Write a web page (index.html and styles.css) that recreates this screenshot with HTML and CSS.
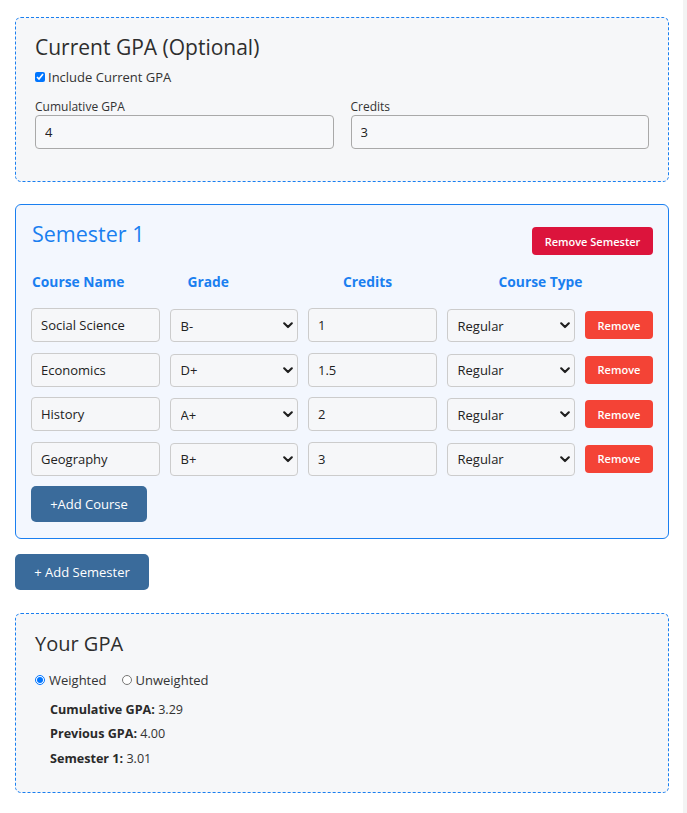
FILE: index.html
```html
<!DOCTYPE html>
<html lang="en">
<head>
<meta charset="utf-8">
<title>GPA Calculator</title>
<link rel="stylesheet" href="styles.css">
</head>
<body>
<main class="page">
  <section class="card card-dashed current">
    <h2 class="card-title">Current GPA (Optional)</h2>
    <label class="check-row"><input type="checkbox" class="check" checked> Include Current GPA</label>
    <div class="fields">
      <div class="field">
        <label class="field-label">Cumulative GPA</label>
        <input class="text-input" type="text" value="4">
      </div>
      <div class="field">
        <label class="field-label">Credits</label>
        <input class="text-input" type="text" value="3">
      </div>
    </div>
  </section>

  <section class="card semester">
    <div class="sem-head">
      <h2 class="sem-title">Semester 1</h2>
      <button class="btn btn-remove-sem">Remove Semester</button>
    </div>
    <div class="col-heads">
      <span>Course Name</span>
      <span>Grade</span>
      <span>Credits</span>
      <span>Course Type</span>
    </div>
    <div class="rows">
      <div class="row">
        <input class="cell-input" type="text" value="Social Science">
        <div class="select-wrap"><select class="cell-select"><option>B-</option></select><svg class="chev" viewBox="0 0 10 7" aria-hidden="true"><path d="M1.2 1.3 L5 5.1 L8.8 1.3"/></svg></div>
        <input class="cell-input" type="text" value="1">
        <div class="select-wrap"><select class="cell-select"><option>Regular</option></select><svg class="chev" viewBox="0 0 10 7" aria-hidden="true"><path d="M1.2 1.3 L5 5.1 L8.8 1.3"/></svg></div>
        <button class="btn btn-remove">Remove</button>
      </div>
      <div class="row">
        <input class="cell-input" type="text" value="Economics">
        <div class="select-wrap"><select class="cell-select"><option>D+</option></select><svg class="chev" viewBox="0 0 10 7" aria-hidden="true"><path d="M1.2 1.3 L5 5.1 L8.8 1.3"/></svg></div>
        <input class="cell-input" type="text" value="1.5">
        <div class="select-wrap"><select class="cell-select"><option>Regular</option></select><svg class="chev" viewBox="0 0 10 7" aria-hidden="true"><path d="M1.2 1.3 L5 5.1 L8.8 1.3"/></svg></div>
        <button class="btn btn-remove">Remove</button>
      </div>
      <div class="row">
        <input class="cell-input" type="text" value="History">
        <div class="select-wrap"><select class="cell-select"><option>A+</option></select><svg class="chev" viewBox="0 0 10 7" aria-hidden="true"><path d="M1.2 1.3 L5 5.1 L8.8 1.3"/></svg></div>
        <input class="cell-input" type="text" value="2">
        <div class="select-wrap"><select class="cell-select"><option>Regular</option></select><svg class="chev" viewBox="0 0 10 7" aria-hidden="true"><path d="M1.2 1.3 L5 5.1 L8.8 1.3"/></svg></div>
        <button class="btn btn-remove">Remove</button>
      </div>
      <div class="row">
        <input class="cell-input" type="text" value="Geography">
        <div class="select-wrap"><select class="cell-select"><option>B+</option></select><svg class="chev" viewBox="0 0 10 7" aria-hidden="true"><path d="M1.2 1.3 L5 5.1 L8.8 1.3"/></svg></div>
        <input class="cell-input" type="text" value="3">
        <div class="select-wrap"><select class="cell-select"><option>Regular</option></select><svg class="chev" viewBox="0 0 10 7" aria-hidden="true"><path d="M1.2 1.3 L5 5.1 L8.8 1.3"/></svg></div>
        <button class="btn btn-remove">Remove</button>
      </div>
    </div>
    <button class="btn btn-add btn-add-course">+Add Course</button>
  </section>

  <button class="btn btn-add btn-add-sem">+ Add Semester</button>

  <section class="card card-dashed result">
    <h2 class="card-title">Your GPA</h2>
    <div class="radio-row">
      <label class="radio-label"><input type="radio" name="mode" class="radio" checked> Weighted</label>
      <label class="radio-label"><input type="radio" name="mode" class="radio"> Unweighted</label>
    </div>
    <div class="results">
      <p class="res"><strong>Cumulative GPA:</strong> 3.29</p>
      <p class="res"><strong>Previous GPA:</strong> 4.00</p>
      <p class="res"><strong>Semester 1:</strong> 3.01</p>
    </div>
  </section>
</main>
</body>
</html>
```
FILE: styles.css
```css
html {
  background: #f3f3f3;
}
body {
  margin: 0;
  width: 683px;
  min-height: 813px;
  background: #ffffff;
  font-family: "Open Sans", "Noto Sans", sans-serif;
  color: #333333;
}
.page {
  padding: 17px 14px 20px 15px;
  display: flex;
  flex-direction: column;
  align-items: flex-start;
}
.card {
  box-sizing: border-box;
  width: 654px;
  border-radius: 6px;
}
.card-dashed {
  border: 1px dashed #1a7ff0;
  background: #f6f7f9;
  padding: 15px 19px 32px 19px;
}
.card-title {
  margin: 0;
  font-size: 21px;
  line-height: 29px;
  font-weight: 400;
  color: #2e2e2e;
}
.check-row {
  display: flex;
  align-items: center;
  margin-top: 6px;
  height: 18px;
  font-size: 13px;
  color: #333;
}
.check {
  width: 10px;
  height: 10px;
  margin: 0 3px 0 0;
}
.fields {
  display: grid;
  grid-template-columns: 1fr 1fr;
  column-gap: 17px;
  margin-top: 12px;
}
.field {
  display: flex;
  flex-direction: column;
}
.field-label {
  font-size: 12px;
  line-height: 17px;
  color: #333;
}
.text-input {
  box-sizing: border-box;
  height: 34px;
  border: 1px solid #a9a9a9;
  border-radius: 4px;
  background: #f7f8fa;
  padding: 0 9px;
  font: 13px "Open Sans", sans-serif;
  color: #222;
}

.semester {
  margin-top: 22px;
  border: 1px solid #1a7ff0;
  background: #f3f7fe;
  padding: 14px 15px 16px 15px;
}
.sem-head {
  display: flex;
  justify-content: space-between;
  align-items: flex-start;
}
.sem-title {
  margin: 0 0 0 1px;
  font-size: 21.5px;
  line-height: 30px;
  font-weight: 400;
  color: #1a7ff0;
}
.btn {
  box-sizing: border-box;
  border: none;
  color: #ffffff;
  font-family: "Open Sans", sans-serif;
  cursor: pointer;
}
.btn-remove-sem {
  margin-top: 8px;
  width: 121px;
  height: 28px;
  border-radius: 4px;
  background: #dc143c;
  font-size: 11px;
  font-weight: 600;
}
.col-heads {
  display: grid;
  grid-template-columns: repeat(4, 1fr);
  margin-top: 17px;
  font-size: 13.8px;
  line-height: 20px;
  font-weight: 700;
  color: #1a7ff0;
}
.col-heads span {
  padding-left: 1px;
}
.rows {
  display: flex;
  flex-direction: column;
  gap: 10.6px;
  margin-top: 16px;
}
.row {
  display: grid;
  grid-template-columns: repeat(4, minmax(0, 1fr)) 68px;
  align-items: center;
  column-gap: 10px;
  height: 34px;
}
.cell-input,
.cell-select {
  box-sizing: border-box;
  width: 100%;
  min-width: 0;
  border: 1px solid #cccccc;
  border-radius: 4px;
  background-color: #f6f7f9;
  font: 13px "Open Sans", sans-serif;
  color: #222;
}
.cell-input {
  height: 34px;
  padding: 0 9px;
}
.select-wrap {
  position: relative;
  height: 33px;
  margin-top: 1px;
}
.cell-select {
  display: block;
  height: 33px;
  padding: 0 24px 0 10px;
  -webkit-appearance: none;
  appearance: none;
  outline: none;
}
.chev {
  position: absolute;
  right: 5px;
  top: 13px;
  width: 10px;
  height: 7px;
  pointer-events: none;
}
.chev path {
  fill: none;
  stroke: #1f1f1f;
  stroke-width: 2.1;
  stroke-linecap: round;
  stroke-linejoin: round;
}
.btn-remove {
  width: 68px;
  height: 28px;
  border-radius: 4px;
  background: #f44336;
  font-size: 11px;
  font-weight: 600;
}
.btn-add {
  height: 36px;
  border-radius: 5px;
  background: #3a6b9b;
  font-size: 13px;
  font-weight: 500;
}
.btn-add-course {
  margin-top: 10px;
  width: 116px;
}
.btn-add-sem {
  margin-top: 15px;
  width: 134px;
}

.result {
  margin-top: 23px;
  padding: 15px 19px 24px 19px;
}
.result .card-title {
  font-size: 20px;
}
.radio-row {
  display: flex;
  align-items: center;
  gap: 15px;
  margin-top: 13px;
  height: 18px;
}
.radio-label {
  display: flex;
  align-items: center;
  font-size: 13px;
  color: #333;
}
.radio {
  width: 10px;
  height: 10px;
  margin: 0 4px 0 0;
}
.results {
  margin: 12px 0 0 15px;
}
.res {
  margin: 0 0 6.5px 0;
  font-size: 12.6px;
  line-height: 18px;
  color: #333;
}
.res:last-child {
  margin-bottom: 0;
}
.res strong {
  font-weight: 700;
  color: #2a2a2a;
}
```
